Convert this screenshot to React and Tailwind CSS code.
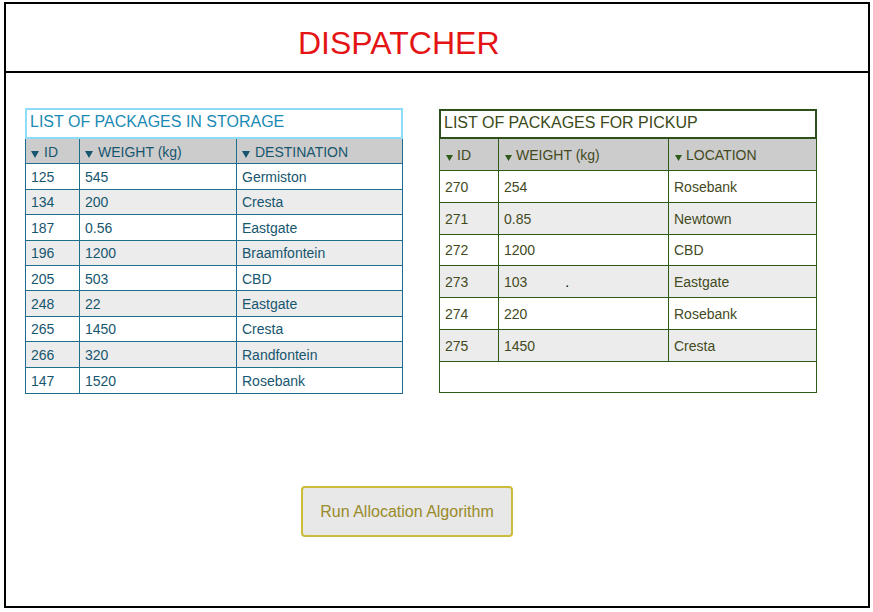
const storage = [
  ['125', '545', 'Germiston'],
  ['134', '200', 'Cresta'],
  ['187', '0.56', 'Eastgate'],
  ['196', '1200', 'Braamfontein'],
  ['205', '503', 'CBD'],
  ['248', '22', 'Eastgate'],
  ['265', '1450', 'Cresta'],
  ['266', '320', 'Randfontein'],
  ['147', '1520', 'Rosebank'],
]

const pickup = [
  ['270', '254', 'Rosebank'],
  ['271', '0.85', 'Newtown'],
  ['272', '1200', 'CBD'],
  ['273', '103', 'Eastgate'],
  ['274', '220', 'Rosebank'],
  ['275', '1450', 'Cresta'],
]

function Arrow({ w = 8, h = 7, color }) {
  return (
    <svg width={w} height={h} viewBox={`0 0 ${w} ${h}`} className="shrink-0 mb-[1px]">
      <polygon points={`0,0 ${w},0 ${w / 2},${h}`} fill={color} />
    </svg>
  )
}

function StorageTable() {
  const cols = ['w-[54px]', 'w-[157px]', 'flex-1']
  return (
    <div className="w-[378px]">
      <div className="h-[31px] border-2 border-[#8fdcf6] pl-[3px] pb-[4px] flex items-center text-[16px] text-[#1a8ab4]">
        LIST OF PACKAGES IN STORAGE
      </div>
      <div className="border border-t-0 border-[#1d6e8c] text-[14px] text-[#17566f]">
        <div className="flex h-[25.4px] bg-[#cccccc] border-b border-[#1d6e8c]">
          {['ID', 'WEIGHT (kg)', 'DESTINATION'].map((t, i) => (
            <div key={t} className={`${cols[i]} flex items-end pb-[4px] pl-[5px] ${i < 2 ? 'border-r border-[#1d6e8c]' : ''}`}>
              <Arrow color="#17566f" />
              <span className="ml-[5px] leading-none">{t}</span>
            </div>
          ))}
        </div>
        {storage.map((r, ri) => (
          <div
            key={r[0]}
            className={`flex h-[25.4px] ${ri % 2 ? 'bg-[#ececec]' : 'bg-white'} ${ri < storage.length - 1 ? 'border-b border-[#1d6e8c]' : ''}`}
          >
            {r.map((c, i) => (
              <div key={i} className={`${cols[i]} flex items-center pt-[2px] pl-[5px] ${i < 2 ? 'border-r border-[#1d6e8c]' : ''}`}>
                {c}
              </div>
            ))}
          </div>
        ))}
      </div>
    </div>
  )
}

function PickupTable() {
  const cols = ['w-[59px]', 'w-[170px]', 'flex-1']
  return (
    <div className="w-[378px] mt-[1px]">
      <div className="h-[30px] border-2 border-[#2e4f18] pl-[3px] pb-[2px] flex items-center text-[16px] text-[#3b4a19]">
        LIST OF PACKAGES FOR PICKUP
      </div>
      <div className="border border-t-0 border-[#2e5a18] text-[14px] text-[#434a1e]">
        <div className="flex h-[32px] bg-[#cccccc] border-b border-[#2e5a18]">
          {['ID', 'WEIGHT (kg)', 'LOCATION'].map((t, i) => (
            <div key={t} className={`${cols[i]} flex items-end pb-[8px] pl-[6px] ${i < 2 ? 'border-r border-[#2e5a18]' : ''}`}>
              <Arrow w={7} h={6} color="#2e5a18" />
              <span className="ml-[4px] leading-none">{t}</span>
            </div>
          ))}
        </div>
        {pickup.map((r, ri) => (
          <div
            key={r[0]}
            className={`flex h-[31.75px] ${ri % 2 ? 'bg-[#ececec]' : 'bg-white'} border-b border-[#2e5a18]`}
          >
            {r.map((c, i) => (
              <div key={i} className={`${cols[i]} flex items-center pt-[2px] pl-[5px] ${i < 2 ? 'border-r border-[#2e5a18]' : ''}`}>
                {c}
                {r[0] === '273' && i === 1 && <span className="ml-[38px] text-black">.</span>}
              </div>
            ))}
          </div>
        ))}
        <div className="h-[30px] bg-white" />
      </div>
    </div>
  )
}

export default function App() {
  return (
    <div className="min-h-screen bg-white pt-[2px] pl-[4px] font-['Liberation_Sans',Arial,sans-serif]">
      <div className="w-[866px] h-[606px] border-2 border-black flex flex-col">
        <div className="h-[69px] border-b-2 border-black pt-[23px] pl-[292px]">
          <h1 className="text-[32px] leading-[32px] text-[#e41414]">DISPATCHER</h1>
        </div>
        <div className="pt-[35px] pl-[19px]">
          <div className="flex items-start gap-[36px]">
            <StorageTable />
            <PickupTable />
          </div>
          <div className="pt-[92px] pl-[276px]">
            <button className="w-[212px] h-[51px] rounded-[4px] border-2 border-[#c9bd3a] bg-[#e8e8e8] pt-[1px] text-[16px] text-[#9a8b2a]">
              Run Allocation Algorithm
            </button>
          </div>
        </div>
      </div>
    </div>
  )
}
